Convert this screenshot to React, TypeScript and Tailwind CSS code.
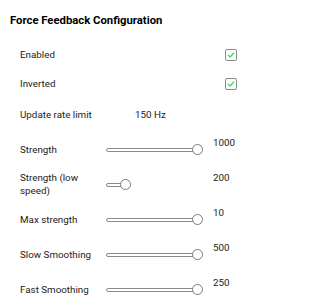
import React from 'react';

const rows = [
  { label: 'Strength', value: '1000', pct: 1 },
  { label: 'Strength (low speed)', value: '200', pct: 0.16 },
  { label: 'Max strength', value: '10', pct: 1 },
  { label: 'Slow Smoothing', value: '500', pct: 1 },
  { label: 'Fast Smoothing', value: '250', pct: 1 },
];

function Check() {
  return (
    <div className="w-[12px] h-[12px] rounded-[2px] border border-[#8a8a8a] flex items-center justify-center bg-white">
      <svg width="8" height="8" viewBox="0 0 8 8" fill="none">
        <path d="M1.2 4.2 L3.1 6 L6.8 2" stroke="#3ddc6a" strokeWidth="1.3" strokeLinecap="round" strokeLinejoin="round" />
      </svg>
    </div>
  );
}

function Slider({ pct }: { pct: number }) {
  // track only drawn left of the thumb
  const thumbLeft = pct * (97 - 11);
  return (
    <div className="relative w-[97px] h-[11px]">
      <div
        className="absolute left-0 top-[4px] h-[4px] rounded-full border border-[#8a8a8a] bg-white"
        style={{ width: thumbLeft + 3 }}
      />
      <div
        className="absolute top-0 w-[11px] h-[11px] rounded-full border border-[#7a7a7a] bg-white"
        style={{ left: thumbLeft }}
      />
    </div>
  );
}

export default function App() {
  return (
    <div className="w-[267px] h-[300px] bg-white text-[#222] font-['Roboto',sans-serif] overflow-hidden">
      <div className="pt-[13px] pl-[10px]">
        <h1 className="text-[11.3px] leading-[16px] font-bold text-black">Force Feedback Configuration</h1>
      </div>

      <div className="pl-[20px] pr-[30px] text-[9.8px]">
        <div className="mt-[12px] h-[28px] flex items-center justify-between">
          <span>Enabled</span>
          <Check />
        </div>
        <div className="mt-[1px] h-[28px] flex items-center justify-between">
          <span>Inverted</span>
          <Check />
        </div>
        <div className="mt-[3px] h-[28px] flex items-center">
          <span className="w-[115px]">Update rate limit</span>
          <span>150 Hz</span>
        </div>

        <div className="mt-[6px] grid grid-cols-[86px_97px_auto] gap-y-[7px]">
          {rows.map((r) => (
            <React.Fragment key={r.label}>
              <div className="h-[28px] flex items-center leading-[13px] pr-[12px]">{r.label}</div>
              <div className="flex items-center">
                <Slider pct={r.pct} />
              </div>
              <div className="self-start pl-[10px] pt-[1px] leading-[14px]">{r.value}</div>
            </React.Fragment>
          ))}
        </div>
      </div>
    </div>
  );
}
